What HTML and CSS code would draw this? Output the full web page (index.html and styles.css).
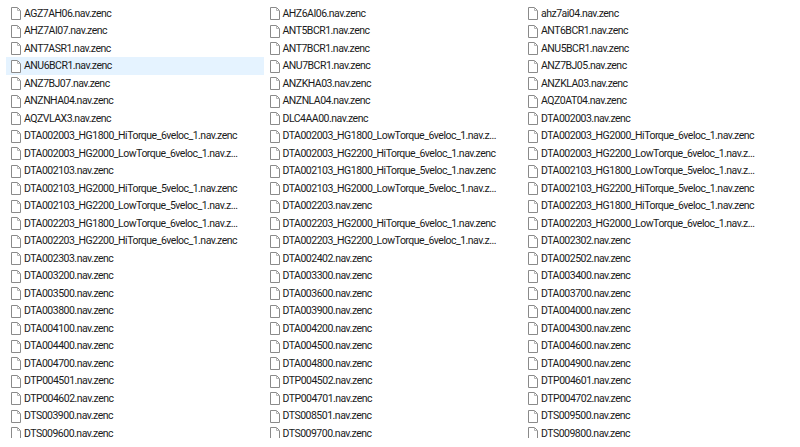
FILE: index.html
```html
<!DOCTYPE html>
<html lang="en">
<head>
<meta charset="utf-8">
<title>Files</title>
<link rel="stylesheet" href="styles.css">
</head>
<body>
<svg class="defs" width="0" height="0"><symbol id="f" viewBox="0 0 10 13"><path d="M.5 .5H6.5L9.5 3.5V12.5H.5Z" fill="#fff" stroke="#8a8a8a"/><path d="M6.5 .5V3.5H9.5" fill="none" stroke="#b5b5b5"/></symbol></svg>
<main class="list" id="list"></main>
<script src="app.js"></script>
</body>
</html>
```

FILE: app.js
```js
const z = '.nav.zenc';
const names = [
'AGZ7AH06'+z,'AHZ7AI07'+z,'ANT7ASR1'+z,'ANU6BCR1'+z,'ANZ7BJ07'+z,'ANZNHA04'+z,'AQZVLAX3'+z,
'DTA002003_HG1800_HiTorque_6veloc_1'+z,'DTA002003_HG2000_LowTorque_6veloc_1.nav.z...','DTA002103'+z,
'DTA002103_HG2000_HiTorque_5veloc_1'+z,'DTA002103_HG2200_LowTorque_5veloc_1.nav.z...',
'DTA002203_HG1800_LowTorque_6veloc_1.nav.z...','DTA002203_HG2200_HiTorque_6veloc_1'+z,
'DTA002303'+z,'DTA003200'+z,'DTA003500'+z,'DTA003800'+z,'DTA004100'+z,'DTA004400'+z,'DTA004700'+z,
'DTP004501'+z,'DTP004602'+z,'DTS003900'+z,'DTS009600'+z,
'AHZ6AI06'+z,'ANT5BCR1'+z,'ANT7BCR1'+z,'ANU7BCR1'+z,'ANZKHA03'+z,'ANZNLA04'+z,'DLC4AA00'+z,
'DTA002003_HG1800_LowTorque_6veloc_1.nav.z...','DTA002003_HG2200_HiTorque_6veloc_1'+z,
'DTA002103_HG1800_HiTorque_5veloc_1'+z,'DTA002103_HG2000_LowTorque_5veloc_1.nav.z...','DTA002203'+z,
'DTA002203_HG2000_HiTorque_6veloc_1'+z,'DTA002203_HG2200_LowTorque_6veloc_1.nav.z...',
'DTA002402'+z,'DTA003300'+z,'DTA003600'+z,'DTA003900'+z,'DTA004200'+z,'DTA004500'+z,'DTA004800'+z,
'DTP004502'+z,'DTP004701'+z,'DTS008501'+z,'DTS009700'+z,
'ahz7ai04'+z,'ANT6BCR1'+z,'ANU5BCR1'+z,'ANZ7BJ05'+z,'ANZKLA03'+z,'AQZ0AT04'+z,'DTA002003'+z,
'DTA002003_HG2000_HiTorque_6veloc_1'+z,'DTA002003_HG2200_LowTorque_6veloc_1.nav.z...',
'DTA002103_HG1800_LowTorque_5veloc_1.nav.z...','DTA002103_HG2200_HiTorque_5veloc_1'+z,
'DTA002203_HG1800_HiTorque_6veloc_1'+z,'DTA002203_HG2000_LowTorque_6veloc_1.nav.z...',
'DTA002302'+z,'DTA002502'+z,'DTA003400'+z,'DTA003700'+z,'DTA004000'+z,'DTA004300'+z,'DTA004600'+z,
'DTA004900'+z,'DTP004601'+z,'DTP004702'+z,'DTS009500'+z,'DTS009800'+z
];
const list = document.getElementById('list');
names.forEach((n, i) => {
  const row = document.createElement('div');
  row.className = i === 3 ? 'row hover' : 'row';
  row.innerHTML = '<svg class="icon"><use href="#f"></use></svg><span class="name"></span>';
  row.querySelector('.name').textContent = n;
  list.appendChild(row);
});
```

FILE: styles.css
```css
html, body { margin: 0; padding: 0; background: #fff; overflow: hidden; }
.defs { display: block; height: 0; }
.list {
  display: grid;
  grid-auto-flow: column;
  grid-template-rows: repeat(25, 17.5px);
  grid-auto-columns: 258.5px;
  height: 433.5px;
  padding: 4.5px 0 0 6px;
  overflow: hidden;
  font-family: Roboto, sans-serif;
  font-size: 10.5px;
  letter-spacing: -0.5px;
  color: #1a1a1a;
}
.row { display: flex; align-items: center; gap: 3px; padding-left: 5px; white-space: nowrap; overflow: hidden; }
.row.hover { background: #e5f3ff; margin-right: 1px; }
.icon { width: 10px; height: 13px; flex: none; margin-top: 1px; }
```
